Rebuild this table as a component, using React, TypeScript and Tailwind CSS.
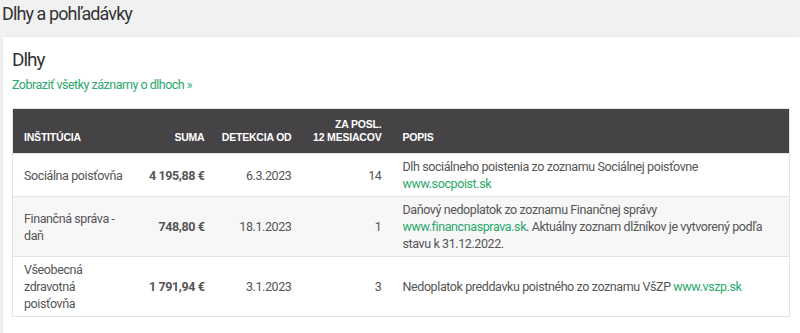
const rows = [
  {
    name: 'Sociálna poisťovňa',
    sum: '4 195,88 €',
    date: '6.3.2023',
    count: '14',
    desc: (
      <>
        Dlh sociálneho poistenia zo zoznamu Sociálnej poisťovne{' '}
        <a className="text-[#2aa86a]">www.socpoist.sk</a>
      </>
    ),
  },
  {
    name: 'Finančná správa - daň',
    sum: '748,80 €',
    date: '18.1.2023',
    count: '1',
    desc: (
      <>
        Daňový nedoplatok zo zoznamu Finančnej správy{' '}
        <a className="text-[#2aa86a]">www.financnasprava.sk</a>. Aktuálny zoznam dlžníkov je vytvorený podľa stavu k 31.12.2022.
      </>
    ),
  },
  {
    name: 'Všeobecná zdravotná poisťovňa',
    sum: '1 791,94 €',
    date: '3.1.2023',
    count: '3',
    desc: (
      <>
        Nedoplatok preddavku poistného zo zoznamu VšZP{' '}
        <a className="text-[#2aa86a]">www.vszp.sk</a>
      </>
    ),
  },
];

export default function App() {
  return (
    <div className="w-[800px] h-[333px] overflow-hidden bg-[#f1f1f1] font-['Roboto',sans-serif]">
      <h1 className="h-[37px] pl-[2px] pt-[2px] text-[18px] leading-[24px] tracking-[-0.9px] text-[#333]">Dlhy a pohľadávky</h1>

      <div className="ml-[3px] h-[296px] bg-white pl-[9px] pr-[10px] pt-[11px] shadow-[0_0_3px_rgba(0,0,0,0.08)]">
        <h2 className="text-[19px] leading-[24px] tracking-[-1px] text-[#333]">Dlhy</h2>
        <a className="mt-[5px] block text-[12.5px] leading-[16px] tracking-[-0.5px] text-[#2aa86a]">Zobraziť všetky záznamy o dlhoch »</a>

        {/* Tabuľka dlhov */}
        <table className="mt-[15px] w-full table-fixed border-collapse border border-[#e4e4e4] text-[12.5px] leading-[17px] tracking-[-0.4px] text-[#555]">
          <colgroup>
            <col className="w-[124px]" />
            <col className="w-[79px]" />
            <col className="w-[87px]" />
            <col className="w-[90px]" />
            <col />
          </colgroup>
          <thead>
            <tr className="h-[45px] bg-[#454346] font-['Liberation_Sans',sans-serif] text-[10.5px] font-bold uppercase leading-[13px] tracking-[-0.2px] text-white">
              <th className="px-[11px] pb-[9px] text-left align-bottom whitespace-nowrap">Inštitúcia</th>
              <th className="pl-[4px] pr-[11px] pb-[9px] text-right align-bottom whitespace-nowrap">Suma</th>
              <th className="pl-[4px] pr-[11px] pb-[9px] text-right align-bottom whitespace-nowrap">Detekcia od</th>
              <th className="pl-[4px] pr-[11px] pb-[9px] text-right align-bottom whitespace-nowrap">
                Za posl.
                <br />
                12 mesiacov
              </th>
              <th className="px-[10px] pb-[9px] text-left align-bottom">Popis</th>
            </tr>
          </thead>
          <tbody>
            {rows.map((r, i) => (
              <tr key={r.name} className={`border-t border-[#e4e4e4] ${i % 2 === 1 ? 'bg-[#f7f7f8]' : 'bg-white'}`}>
                <td className="px-[11px] py-[4px] align-middle">{r.name}</td>
                <td className="pl-[4px] pr-[11px] py-[4px] text-right align-middle font-bold whitespace-nowrap">{r.sum}</td>
                <td className="pl-[4px] pr-[11px] py-[4px] text-right align-middle">{r.date}</td>
                <td className="pl-[4px] pr-[11px] py-[4px] text-right align-middle">{r.count}</td>
                <td className="px-[10px] py-[4px] align-middle">{r.desc}</td>
              </tr>
            ))}
          </tbody>
        </table>
      </div>
    </div>
  );
}
